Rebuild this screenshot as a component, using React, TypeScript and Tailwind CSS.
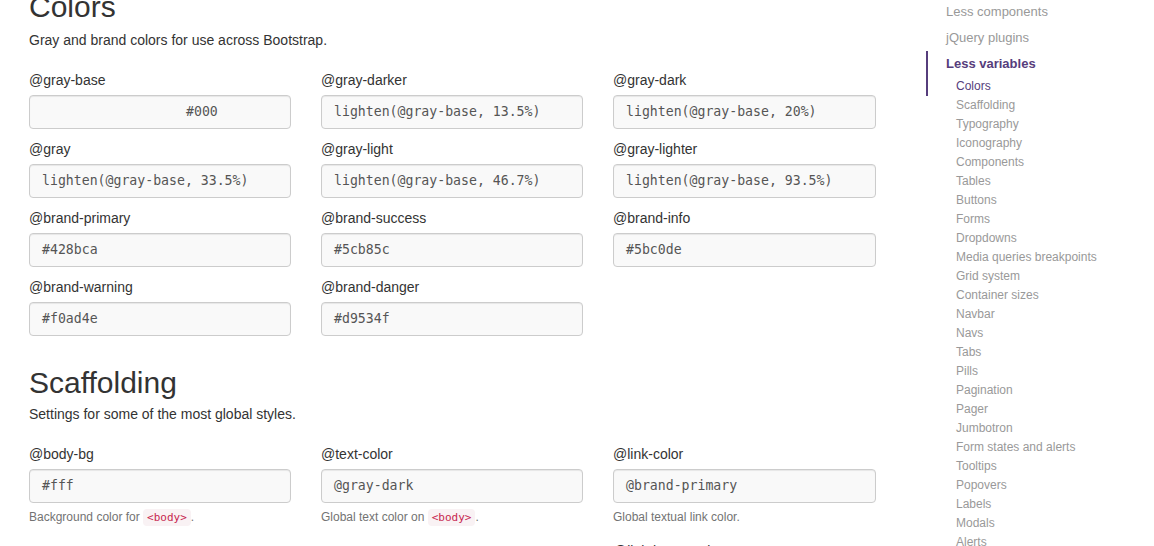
import React from 'react';

type Variable = {
  name: string;
  value: string;
  help?: React.ReactNode;
  indent?: string;
};

const colorVars: Variable[] = [
  { name: '@gray-base', value: '#000', indent: 'pl-[156px]' },
  { name: '@gray-darker', value: 'lighten(@gray-base, 13.5%)' },
  { name: '@gray-dark', value: 'lighten(@gray-base, 20%)' },
  { name: '@gray', value: 'lighten(@gray-base, 33.5%)' },
  { name: '@gray-light', value: 'lighten(@gray-base, 46.7%)' },
  { name: '@gray-lighter', value: 'lighten(@gray-base, 93.5%)' },
  { name: '@brand-primary', value: '#428bca' },
  { name: '@brand-success', value: '#5cb85c' },
  { name: '@brand-info', value: '#5bc0de' },
  { name: '@brand-warning', value: '#f0ad4e' },
  { name: '@brand-danger', value: '#d9534f' },
];

const Code = ({ children }: { children: React.ReactNode }) => (
  <code className="rounded-[4px] bg-[#f9f2f4] px-[4px] py-[2px] font-['DejaVu_Sans_Mono',monospace] text-[11px] text-[#c7254e]">
    {children}
  </code>
);

const scaffoldVars: Variable[] = [
  { name: '@body-bg', value: '#fff', help: <>Background color for <Code>&lt;body&gt;</Code>.</> },
  { name: '@text-color', value: '@gray-dark', help: <>Global text color on <Code>&lt;body&gt;</Code>.</> },
  { name: '@link-color', value: '@brand-primary', help: <>Global textual link color.</> },
];

const subNav = [
  'Colors', 'Scaffolding', 'Typography', 'Iconography', 'Components', 'Tables', 'Buttons', 'Forms',
  'Dropdowns', 'Media queries breakpoints', 'Grid system', 'Container sizes', 'Navbar', 'Navs', 'Tabs',
  'Pills', 'Pagination', 'Pager', 'Jumbotron', 'Form states and alerts', 'Tooltips', 'Popovers',
  'Labels', 'Modals', 'Alerts',
];

const VarInput = ({ v }: { v: Variable }) => (
  <div className={v.help ? 'mb-[15px]' : 'mb-[10px]'}>
    <label className="block mb-[5px] text-[14px] leading-[20px] text-[#333]">{v.name}</label>
    <div
      className={`h-[34px] rounded-[4px] border border-[#ccc] bg-[#f9f9f9] shadow-[inset_0_1px_1px_rgba(0,0,0,0.075)] flex items-center font-['DejaVu_Sans_Mono',monospace] text-[13.2px] text-[#555] ${v.indent ?? 'pl-[12px]'}`}
    >
      {v.value}
    </div>
    {v.help && <p className="mt-[6px] text-[12px] leading-[17px] text-[#737373]">{v.help}</p>}
  </div>
);

export default function App() {
  return (
    <div className="h-[546px] overflow-hidden bg-white font-['Liberation_Sans',Arial,sans-serif] flex">
      <main className="ml-[29px] w-[847px] -mt-[10px]">
        <section>
          <h1 className="text-[30px] leading-[33px] text-[#333]">Colors</h1>
          <p className="mt-[7px] text-[14px] leading-[20px] text-[#333]">Gray and brand colors for use across Bootstrap.</p>
          <div className="mt-[20px] grid grid-cols-[262px_262px_263px] gap-x-[30px]">
            {colorVars.map((v) => (
              <VarInput key={v.name} v={v} />
            ))}
          </div>
        </section>

        <section className="mt-[20px]">
          <h1 className="text-[30px] leading-[33px] text-[#333]">Scaffolding</h1>
          <p className="mt-[5px] text-[14px] leading-[20px] text-[#333]">Settings for some of the most global styles.</p>
          <div className="mt-[20px] grid grid-cols-[262px_262px_263px] gap-x-[30px]">
            {scaffoldVars.map((v) => (
              <VarInput key={v.name} v={v} />
            ))}
            <div className="col-start-3">
              <label className="block text-[14px] leading-[20px] text-[#333]">@link-hover-color</label>
            </div>
          </div>
        </section>
      </main>

      <nav className="ml-[50px] -mt-[1px] flex-1 text-[13px]">
        <a className="block py-[4px] pl-[20px] leading-[18px] text-[#999]">Less components</a>
        <a className="block py-[4px] pl-[20px] leading-[18px] text-[#999]">jQuery plugins</a>
        <div>
          <a className="block py-[4px] pl-[18px] leading-[18px] font-bold text-[#563d7c] border-l-2 border-[#563d7c]">
            Less variables
          </a>
          <ul className="text-[12px]">
            {subNav.map((item, i) => (
              <li key={item}>
                <a
                  className={
                    i === 0
                      ? 'block py-[1px] pl-[28px] leading-[17px] text-[#563d7c] border-l-2 border-[#563d7c]'
                      : 'block py-[1px] pl-[30px] leading-[17px] text-[#999]'
                  }
                >
                  {item}
                </a>
              </li>
            ))}
          </ul>
        </div>
      </nav>
    </div>
  );
}
